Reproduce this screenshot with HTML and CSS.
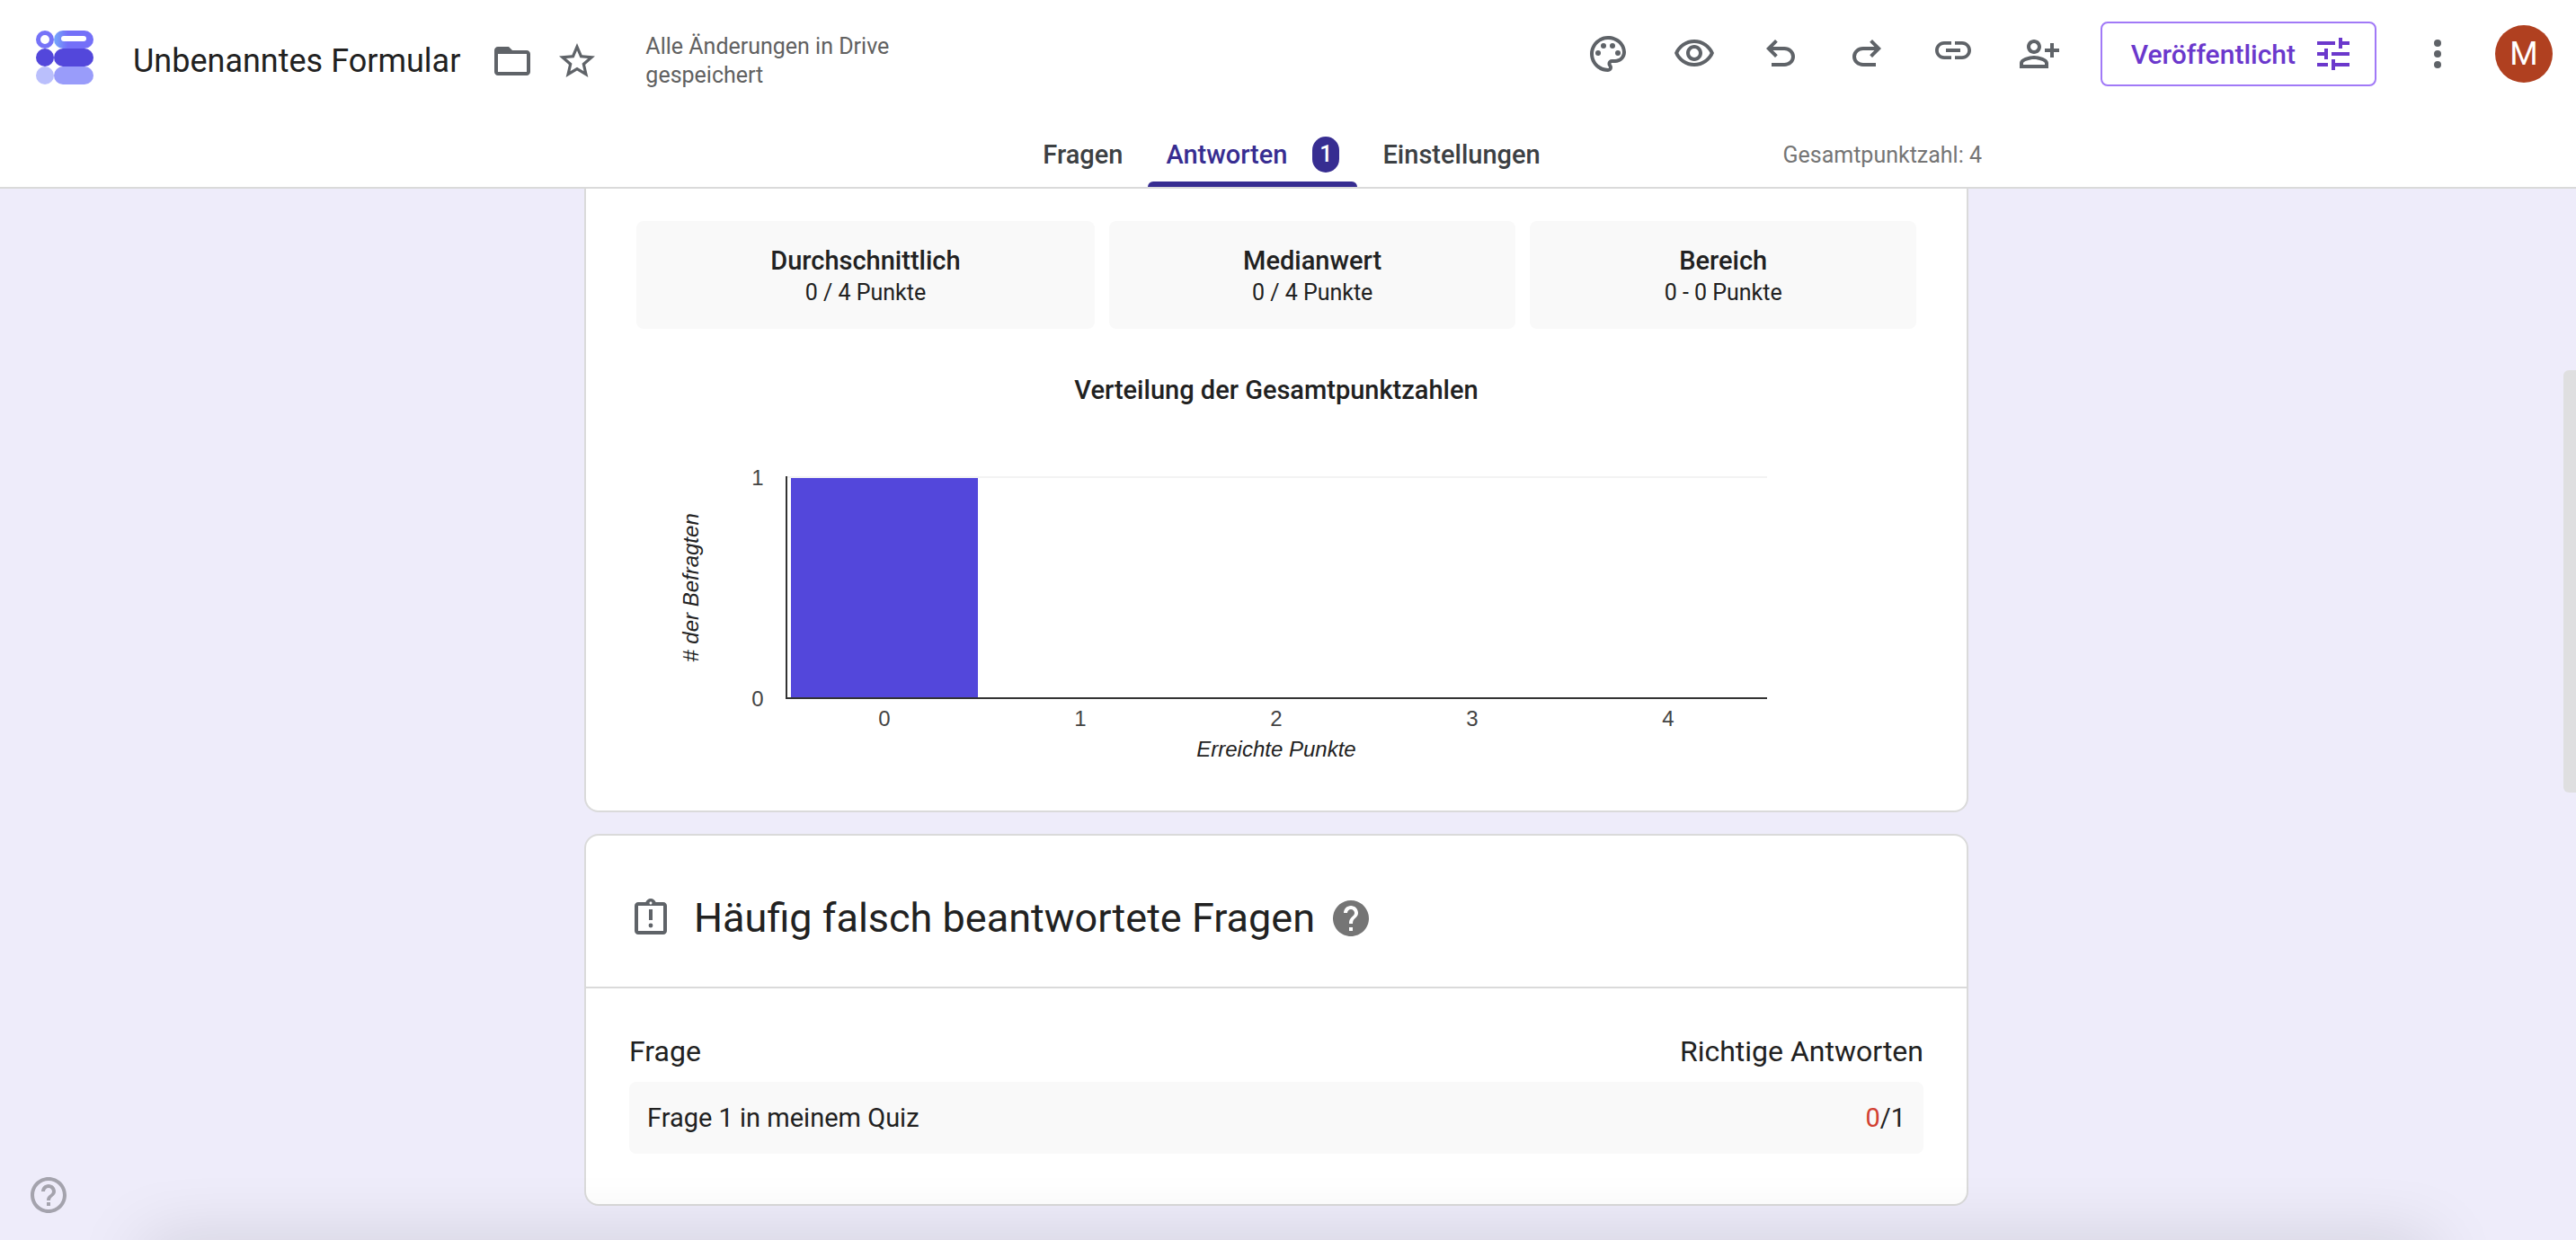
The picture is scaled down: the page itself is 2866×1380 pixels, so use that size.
FILE: index.html
```
<!DOCTYPE html>
<html lang="de">
<head>
    <meta charset="UTF-8">
    <meta name="viewport" content="width=device-width, initial-scale=1.0">
    <title>Unbenanntes Formular</title>
    <link rel="stylesheet" href="styles.css">
</head>
<body>
    <header class="header">
        <div class="topbar">
            <div class="topbar-left">
                <a href="#" class="logo" aria-label="Startseite">
                    <svg width="64" height="60" viewBox="0 0 64 60">
                        <defs>
                            <linearGradient id="pill" x1="0" x2="1" y1="0" y2="0">
                                <stop offset="0" stop-color="#75a9fb"/>
                                <stop offset="0.35" stop-color="#7470f8"/>
                            </linearGradient>
                        </defs>
                        <circle cx="10" cy="10" r="7.5" fill="#fff" stroke="#7673f8" stroke-width="5"/>
                        <rect x="20" y="0" width="44" height="20" rx="10" fill="url(#pill)"/>
                        <rect x="28" y="6" width="28" height="6" rx="3" fill="#fff"/>
                        <circle cx="10" cy="30" r="10" fill="#5347db"/>
                        <rect x="20" y="20" width="44" height="20" rx="10" fill="#5347db"/>
                        <circle cx="10" cy="50" r="10" fill="#babffc"/>
                        <rect x="20" y="40" width="44" height="20" rx="10" fill="#999cfa"/>
                    </svg>
                </a>
                <h1 class="form-title">Unbenanntes Formular</h1>
                <button class="icon-button" aria-label="Verschieben">
                    <svg viewBox="0 0 24 24"><path d="M20 6h-8l-2-2H4c-1.1 0-2 .9-2 2v12c0 1.1.9 2 2 2h16c1.1 0 2-.9 2-2V8c0-1.1-.9-2-2-2zm0 12H4V8h16v10z"/></svg>
                </button>
                <button class="icon-button star-button" aria-label="Markieren">
                    <svg viewBox="0 0 24 24"><path d="M22 9.24l-7.19-.62L12 2 9.19 8.63 2 9.24l5.46 4.73L5.82 21 12 17.27 18.18 21l-1.63-7.03L22 9.24zM12 15.4l-3.76 2.27 1-4.28-3.32-2.88 4.38-.38L12 6.1l1.71 4.04 4.38.38-3.32 2.88 1 4.28L12 15.4z"/></svg>
                </button>
                <p class="save-status">Alle Änderungen in Drive gespeichert</p>
            </div>
            <div class="topbar-right">
                <div class="tools">
                    <button class="icon-button" aria-label="Design anpassen">
                        <svg viewBox="0 0 24 24"><path d="M12 22C6.49 22 2 17.51 2 12S6.49 2 12 2s10 4.04 10 9c0 3.31-2.69 6-6 6h-1.77c-.28 0-.5.22-.5.5 0 .12.05.23.13.33.41.47.64 1.06.64 1.67A2.5 2.5 0 0 1 12 22zm0-18c-4.41 0-8 3.59-8 8s3.59 8 8 8c.28 0 .5-.22.5-.5a.54.54 0 0 0-.14-.35c-.41-.46-.63-1.05-.63-1.65a2.5 2.5 0 0 1 2.5-2.5H16c2.21 0 4-1.79 4-4 0-3.86-3.59-7-8-7z"/><circle cx="6.5" cy="11.5" r="1.5"/><circle cx="9.5" cy="7.5" r="1.5"/><circle cx="14.5" cy="7.5" r="1.5"/><circle cx="17.5" cy="11.5" r="1.5"/></svg>
                    </button>
                    <button class="icon-button" aria-label="Vorschau">
                        <svg viewBox="0 0 24 24"><path d="M12 6c3.79 0 7.17 2.13 8.82 5.5C19.17 14.87 15.79 17 12 17s-7.17-2.13-8.82-5.5C4.83 8.13 8.21 6 12 6m0-2C7 4 2.73 7.11 1 11.5 2.73 15.89 7 19 12 19s9.27-3.11 11-7.5C21.27 7.11 17 4 12 4zm0 5a2.5 2.5 0 0 1 0 5 2.5 2.5 0 0 1 0-5m0-2c-2.48 0-4.5 2.02-4.5 4.5S9.52 16 12 16s4.5-2.02 4.5-4.5S14.48 7 12 7z"/></svg>
                    </button>
                    <button class="icon-button" aria-label="Rückgängig">
                        <svg viewBox="0 0 24 24"><path d="M7 19v-2h7.1q1.575 0 2.737-1Q18 15 18 13.5T16.837 11Q15.675 10 14.1 10H7.8l2.6 2.6L9 14 4 9l5-5 1.4 1.4L7.8 8h6.3q2.425 0 4.163 1.575Q20 11.15 20 13.5q0 2.35-1.737 3.925Q16.525 19 14.1 19Z"/></svg>
                    </button>
                    <button class="icon-button" aria-label="Wiederholen">
                        <svg viewBox="0 0 24 24"><path d="M17 19v-2H9.900q-1.575 0-2.737-1Q6 15 6 13.500T7.163 11Q8.325 10 9.900 10h6.300l-2.600 2.600L15 14l5-5-5-5-1.400 1.400L16.200 8H9.900q-2.425 0-4.163 1.575Q4 11.150 4 13.500q0 2.350 1.737 3.925Q7.475 19 9.900 19Z"/></svg>
                    </button>
                    <button class="icon-button" aria-label="Link kopieren">
                        <svg viewBox="0 2 24 24"><path d="M3.900 12c0-1.710 1.390-3.100 3.100-3.100h4V7H7c-2.760 0-5 2.240-5 5s2.240 5 5 5h4v-1.900H7c-1.710 0-3.100-1.390-3.100-3.100zM8 13h8v-2H8v2zm9-6h-4v1.900h4c1.710 0 3.100 1.390 3.100 3.100s-1.390 3.100-3.100 3.100h-4V17h4c2.760 0 5-2.240 5-5s-2.240-5-5-5z"/></svg>
                    </button>
                    <button class="icon-button" aria-label="Freigeben">
                        <svg viewBox="0 0 24 24"><path d="M9 12c2.210 0 4-1.790 4-4s-1.790-4-4-4-4 1.790-4 4 1.790 4 4 4zm0-6c1.100 0 2 .9 2 2s-.9 2-2 2-2-.9-2-2 .9-2 2-2zM9 13c-2.670 0-8 1.340-8 4v3h16v-3c0-2.660-5.330-4-8-4zm6 5H3v-1c.2-.71 3.300-2 6-2s5.800 1.290 6 2v1zM20 9V6h-2v3h-3v2h3v3h2v-3h3V9z"/></svg>
                    </button>
                </div>
                <button class="publish-button">
                    Veröffentlicht
                    <svg viewBox="0 0 24 24"><path d="M3 17v2h6v-2H3zM3 5v2h10V5H3zm10 16v-2h8v-2h-8v-2h-2v6h2zM7 9v2H3v2h4v2h2V9H7zm14 4v-2H11v2h10zm-6-4h2V7h4V5h-4V3h-2v6z"/></svg>
                </button>
                <button class="icon-button" aria-label="Mehr">
                    <svg viewBox="0 0 24 24"><circle cx="12" cy="6" r="2"/><circle cx="12" cy="12" r="2"/><circle cx="12" cy="18" r="2"/></svg>
                </button>
                <button class="avatar">M</button>
            </div>
        </div>
        <div class="tabbar">
            <nav class="tabs">
                <a href="#" class="tab">Fragen</a>
                <a href="#" class="tab active">Antworten <span class="badge">1</span></a>
                <a href="#" class="tab">Einstellungen</a>
            </nav>
            <span class="total-points">Gesamtpunktzahl: 4</span>
        </div>
    </header>

    <main class="content">
        <section class="card summary">
            <div class="stats">
                <div class="stat">
                    <h3>Durchschnittlich</h3>
                    <p>0 / 4 Punkte</p>
                </div>
                <div class="stat">
                    <h3>Medianwert</h3>
                    <p>0 / 4 Punkte</p>
                </div>
                <div class="stat">
                    <h3>Bereich</h3>
                    <p>0 - 0 Punkte</p>
                </div>
            </div>
            <h3 class="chart-title">Verteilung der Gesamtpunktzahlen</h3>
            <svg class="chart" viewBox="0 0 1424 408">
                <rect x="168" y="76" width="1090" height="2" fill="#f3f3f3"/>
                <rect x="172" y="78" width="208" height="244" fill="#5347db"/>
                <rect x="166" y="76" width="2" height="248" fill="#333"/>
                <rect x="166" y="322" width="1092" height="2" fill="#333"/>
                <g class="tick">
                    <text x="135" y="86">1</text>
                    <text x="135" y="332">0</text>
                    <text x="276" y="354">0</text>
                    <text x="494" y="354">1</text>
                    <text x="712" y="354">2</text>
                    <text x="930" y="354">3</text>
                    <text x="1148" y="354">4</text>
                </g>
                <text class="axis-title" x="712" y="388">Erreichte Punkte</text>
                <text class="axis-title" transform="translate(69 200) rotate(-90)"># der Befragten</text>
            </svg>
        </section>

        <section class="card">
            <div class="card-header">
                <svg class="card-icon" viewBox="0 0 24 24"><path d="M19 3h-4.180C14.400 1.840 13.300 1 12 1s-2.400.84-2.820 2H5c-1.100 0-2 .9-2 2v14c0 1.100.9 2 2 2h14c1.100 0 2-.9 2-2V5c0-1.100-.9-2-2-2zm-7-.25c.41 0 .75.34.75.75s-.34.75-.75.75-.75-.34-.75-.75.34-.75.75-.75zM19 19H5V5h14v14z"/><path d="M11 7h2v6h-2z"/><circle cx="12" cy="16" r="1.200"/></svg>
                <h2>Häufig falsch beantwortete Fragen</h2>
                <button class="help-button" aria-label="Hilfe">
                    <svg viewBox="0 0 24 24"><path d="M12 2C6.480 2 2 6.480 2 12s4.480 10 10 10 10-4.480 10-10S17.520 2 12 2zm1 17h-2v-2h2v2zm2.070-7.750l-.9.92C13.450 12.900 13 13.500 13 15h-2v-.5c0-1.100.45-2.100 1.170-2.830l1.240-1.260c.37-.36.59-.86.59-1.410 0-1.100-.9-2-2-2s-2 .9-2 2H8c0-2.210 1.790-4 4-4s4 1.790 4 4c0 .88-.36 1.680-.93 2.250z"/></svg>
                </button>
            </div>
            <table class="questions">
                <thead>
                    <tr>
                        <th>Frage</th>
                        <th>Richtige Antworten</th>
                    </tr>
                </thead>
                <tbody>
                    <tr>
                        <td>Frage 1 in meinem Quiz</td>
                        <td><span class="wrong">0</span>/1</td>
                    </tr>
                </tbody>
            </table>
        </section>
    </main>

    <button class="page-help" aria-label="Hilfe und Feedback">
        <svg viewBox="0 0 24 24"><path d="M11 18h2v-2h-2v2zm1-16C6.480 2 2 6.480 2 12s4.480 10 10 10 10-4.480 10-10S17.520 2 12 2zm0 18c-4.410 0-8-3.590-8-8s3.590-8 8-8 8 3.590 8 8-3.590 8-8 8zm0-14c-2.210 0-4 1.790-4 4h2c0-1.100.9-2 2-2s2 .9 2 2c0 2-3 1.750-3 5h2c0-2.250 3-2.500 3-5 0-2.210-1.790-4-4-4z"/></svg>
    </button>
    <div class="bottom-shadow"></div>
    <div class="scroll-thumb"></div>
</body>
</html>
```

FILE: styles.css
```
* {
    box-sizing: border-box;
}
body {
    margin: 0;
    height: 100vh;
    overflow: hidden;
    font-family: Roboto, "Liberation Sans", sans-serif;
    font-size: 29px;
    color: #212121;
    background-color: #eeecfa;
}
h1, h2, h3, p {
    margin: 0;
    font-weight: 400;
}
a {
    color: inherit;
    text-decoration: none;
}
button {
    padding: 0;
    border: none;
    background: none;
    font-family: inherit;
    cursor: pointer;
}
svg {
    display: block;
}

/* header */
.header {
    background-color: #fff;
    border-bottom: 2px solid #dadada;
}
.topbar {
    display: flex;
    justify-content: space-between;
    align-items: flex-start;
    height: 136px;
    padding: 24px 26px 0 40px;
}
.topbar-left,
.topbar-right,
.tools {
    display: flex;
    align-items: center;
}
.topbar-left {
    height: 88px;
}
.logo {
    margin-bottom: 8px;
}
.form-title {
    margin: 0 34px 0 44px;
    font-size: 36px;
    line-height: 48px;
}
.icon-button {
    width: 48px;
    height: 48px;
    fill: #5f6368;
}
.star-button {
    margin: 0 52px 0 24px;
}
.save-status {
    max-width: 288px;
    font-size: 25px;
    line-height: 32px;
    color: #616161;
}
.topbar-right {
    gap: 44px;
    height: 72px;
}
.topbar-right .avatar {
    margin-left: -4px;
}
.tools {
    gap: 48px;
}
.publish-button {
    display: flex;
    align-items: center;
    gap: 18px;
    height: 72px;
    padding: 0 22px 0 32px;
    border: 2px solid #a179f7;
    border-radius: 8px;
    font-size: 30px;
    font-weight: 500;
    color: #6b38cc;
    fill: #6b38cc;
}
.publish-button svg {
    width: 48px;
    height: 48px;
}
.avatar {
    width: 64px;
    height: 64px;
    border-radius: 50%;
    background-color: #b04020;
    font-size: 36px;
    color: #fff;
}

/* tabs */
.tabbar {
    display: grid;
    grid-template-columns: 1fr auto 1fr;
    align-items: center;
    max-width: 1544px;
    height: 72px;
    margin: 0 auto;
}
.tabs {
    grid-column: 2;
    display: flex;
    gap: 8px;
    padding-left: 8px;
}
.tab {
    position: relative;
    display: flex;
    align-items: center;
    height: 72px;
    padding: 0 20px;
    font-weight: 500;
    color: #3c4043;
}
.tab.active {
    color: #372d91;
}
.tab.active::after {
    content: "";
    position: absolute;
    left: 0;
    right: 0;
    bottom: 0;
    height: 6px;
    border-radius: 6px 6px 0 0;
    background-color: #372d91;
}
.badge {
    width: 30px;
    height: 40px;
    margin-left: 28px;
    border-radius: 16px;
    background-color: #372d91;
    font-size: 25px;
    line-height: 40px;
    text-align: center;
    color: #fff;
}
.total-points {
    justify-self: end;
    font-size: 25px;
    color: #757575;
}

/* cards */
.content {
    display: flex;
    flex-direction: column;
    align-items: center;
    gap: 24px;
    padding: 0 26px 0 0;
}
.card {
    width: 100%;
    max-width: 1540px;
    border: 2px solid #dadada;
    border-radius: 16px;
    background-color: #fff;
}
.summary {
    padding: 36px 56px 40px;
    border-top: none;
    border-radius: 0 0 16px 16px;
}
.stats {
    display: flex;
    gap: 16px;
}
.stat {
    flex: 1 1 auto;
    padding: 24px 0;
    border-radius: 8px;
    background-color: #f9f9f9;
    text-align: center;
}
.stat h3,
.chart-title {
    font-size: 29px;
    font-weight: 500;
    line-height: 40px;
}
.stat p {
    font-size: 25px;
    line-height: 32px;
}
.chart-title {
    margin-top: 48px;
    text-align: center;
}
.chart {
    width: 100%;
    font-family: "Liberation Sans", Arial, sans-serif;
    font-size: 24px;
    text-anchor: middle;
}
.tick {
    fill: #444;
}
.axis-title {
    font-style: italic;
    fill: #222;
}
.card-header {
    display: flex;
    align-items: center;
    gap: 16px;
    padding: 64px 48px 48px;
    border-bottom: 2px solid #dadada;
}
.card-header h2 {
    font-size: 45px;
    line-height: 56px;
}
.card-icon,
.help-button {
    width: 48px;
    height: 48px;
    fill: #5f6368;
}
.card-icon {
    margin-right: 8px;
}
.help-button {
    fill: #757575;
}

/* table */
.questions {
    width: calc(100% - 96px);
    margin: 48px 48px 56px;
    border-collapse: separate;
    border-spacing: 0;
}
.questions th {
    padding: 0 0 12px;
    font-size: 32px;
    font-weight: 400;
    line-height: 44px;
    text-align: left;
}
.questions td {
    height: 80px;
    padding: 0 20px;
    background-color: #f9f9f9;
}
.questions td:first-child {
    border-radius: 8px 0 0 8px;
}
.questions td:last-child {
    border-radius: 0 8px 8px 0;
}
.questions th:last-child,
.questions td:last-child {
    text-align: right;
}
.wrong {
    color: #d23f31;
}

/* floating parts */
.page-help {
    position: fixed;
    left: 30px;
    bottom: 26px;
    width: 48px;
    height: 48px;
    fill: #a4a3ad;
}
.bottom-shadow {
    position: fixed;
    left: 160px;
    right: 160px;
    bottom: -48px;
    height: 40px;
    box-shadow: 0 0 80px rgba(0, 0, 0, 0.2);
    pointer-events: none;
}
.scroll-thumb {
    position: fixed;
    top: 412px;
    right: 0;
    width: 14px;
    height: 470px;
    border-radius: 6px 0 0 6px;
    background-color: #dfdfe0;
}
```
